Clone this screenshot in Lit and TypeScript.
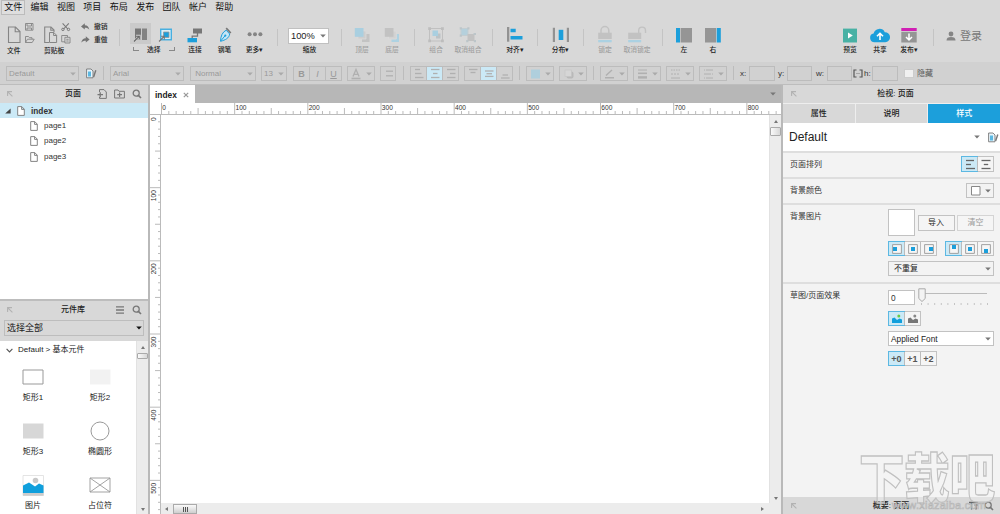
import { LitElement, html, svg, css } from "lit";
import { customElement } from "lit/decorators.js";

const ic = (w: number, h: number, body: any) =>
  html`<svg class="ic" width=${w} height=${h} viewBox="0 0 ${w} ${h}" fill="none">${body}</svg>`;

const G = "#858585";
const BLUE = "#1c9fdb";

const pageIcon = ic(8, 10, svg`<path d="M.7 .6H4.8L7.3 3.2V9.4H.7Z M4.6 .8V3.4H7.2" stroke="#777" stroke-width=".9" fill="#fff"/>`);
const search = ic(10, 10, svg`<circle cx="4.2" cy="4.2" r="3" stroke="#777" stroke-width="1.3"/><path d="M6.4 6.4L9 9" stroke="#777" stroke-width="1.6"/>`);
const corner = ic(6, 6, svg`<path d="M.6 5V.6H5M.8 .8L5.4 5.4" stroke="#b2b2b2" stroke-width="1.1"/>`);
const styleIcon = ic(11, 11, svg`<path d="M.6 1H5L7 3V9.8H.6Z" stroke="#777" stroke-width=".9" fill="#e8f5fb"/><path d="M2 3.5H5V8.5H2Z" fill="#5bb8e2"/><path d="M9.8 2.6L7.6 9" stroke="#777" stroke-width="1.4"/>`);
const arrow = (c = "#888") => ic(6, 4, svg`<path d="M.2 .4H5.8L3 3.5Z" fill="${c}"/>`);

const fileIcons = ic(32, 24, svg`
  <path d="M3.5 5H10.5L15 9.5V20.5H3.5ZM10.2 5V9.8H15" stroke="${G}" stroke-width="1.1"/>
  <path d="M20.5 1.5H28V8.2H20.5ZM22 1.5V4H26.5V1.5M22 8V6H26.5V8" stroke="${G}" stroke-width=".9"/>
  <path d="M20.5 20.5V14.5H23.5L24.5 15.7H27V17.2M20.5 20.5L22.5 17.2H29.2L27.2 20.5Z" stroke="${G}" stroke-width=".9"/>`);
const clipIcons = ic(32, 24, svg`
  <path d="M7 20.5H2.7V5H9L12 8V10M8.8 5V8.3H12" stroke="${G}" stroke-width="1.1"/>
  <path d="M7.5 10.5H11.8L14.6 13.3V20.5H7.5ZM11.6 10.5V13.5H14.6" stroke="${G}" stroke-width="1"/>
  <path d="M20.6 1.3L25.8 7M26.8 1.3L21.6 7" stroke="#777" stroke-width="1.1"/><circle cx="20.9" cy="7.4" r="1.2" stroke="#777"/><circle cx="26.5" cy="7.4" r="1.2" stroke="#777"/>
  <path d="M23 19.8H19.7V13.5H25.5V15M22.9 15.3H28V21H22.9ZM24.3 17.3H26.6M24.3 19H26.6" stroke="${G}" stroke-width=".9"/>`);
const undo = ic(9, 8, svg`<path d="M0 3.4L3.8 .2V2.2C6.4 2.3 8 3.8 8.3 6.8C7.2 5.2 5.9 4.7 3.8 4.7V6.6Z" fill="#747474"/>`);
const redo = ic(9, 8, svg`<path d="M8.6 3.4L4.8 .2V2.2C2.2 2.3 .6 3.8 .3 6.8C1.4 5.2 2.7 4.7 4.8 4.7V6.6Z" fill="#747474"/>`);
const selA = ic(21, 21, svg`<path d="M5 5.5H11V17H9.5L5 17Z" fill="#767676"/><path d="M12 5.5H17V17H12Z" fill="#828282"/><path d="M4 18.5L9.5 13M6 13H9.5V17" stroke="#d0d0d0" stroke-width="2.4"/><path d="M4 18.5L9.3 13.2M6 13.2H9.3V16.5" stroke="#666" stroke-width="1.1"/>`);
const selB = ic(21, 21, svg`<path d="M5.7 6.2H16.3V16.8H5.7Z" stroke="#48afe0" stroke-width="1.4" fill="#dceef6"/><path d="M8.5 9H14V14.5H8.5Z" fill="${BLUE}" stroke="#999" stroke-width=".8"/><path d="M4 18.5L9.5 13M6 13.2H9.3V16.5" stroke="#777" stroke-width="1.1"/>`);
const connect = ic(16, 24, svg`<path d="M6 6.5H15V11.5H6Z" fill="#777"/><path d="M5.2 16V14.2H10.5V11" stroke="#777" stroke-width="1.3"/><path d="M.5 16H10V20.3H.5Z" fill="${BLUE}"/>`);
const pen = ic(14, 24, svg`<path d="M8.2 8.2L11.7 12C11 16.2 7.5 18 2.5 19.3C2.7 14 4.4 10 8.2 8.2Z" fill="#c6e6f5" stroke="${BLUE}"/><path d="M2.7 19L7 13.8" stroke="${BLUE}"/><circle cx="7.3" cy="13.6" r="1.1" fill="${BLUE}"/><path d="M8.2 6.2L12.8 11" stroke="#777" stroke-width="1.7"/>`);
const dots = ic(16, 24, svg`<circle cx="2.6" cy="12.3" r="2" fill="#858585"/><circle cx="8" cy="12.3" r="2" fill="#858585"/><circle cx="13.4" cy="12.3" r="2" fill="#858585"/>`);
const front = ic(16, 24, svg`<path d="M8 12H15.5V20H8Z" fill="#c3c3c3"/><path d="M4 9H12V17H4Z" fill="#cdcdcd" stroke="#dadada" stroke-width=".8"/><path d="M.8 6H9.5V14.8H.8Z" fill="#a9cfe0"/>`);
const back = ic(16, 24, svg`<path d="M7.5 12H15V20H7.5Z" fill="#aed2e2"/><path d="M4.5 9H12.3V17H4.5Z" fill="#d2d2d2" stroke="#dadada"/><path d="M.8 6H9.5V14.8H.8Z" fill="#c2c2c2"/>`);
const group = ic(16, 24, svg`<path d="M1.5 6.5H14.5V19H1.5Z" stroke="#c0c0c0"/><path d="M8 11.5H12.5V16.5H8Z" fill="#bcc3c6"/><path d="M4.5 8.5H10V14H4.5Z" fill="#a9cfe0"/><path d="M.2 5.2H3V8H.2ZM13 5.2H15.8V8H13ZM.2 17.5H3V20.3H.2ZM13 17.5H15.8V20.3H13Z" fill="#bdbdbd"/>`);
const ungroup = ic(18, 24, svg`<path d="M2 6.5H9V13.5H2Z" fill="#b5d0dc" stroke="#c3cdd1"/><path d="M8.5 12H15.5V19H8.5Z" fill="#c2c2c2"/><path d="M.7 5.2H2.9V7.4H.7ZM8.3 5.2H10.5V7.4H8.3ZM.7 12.6H2.9V14.8H.7ZM14.5 11H17V13H14.5ZM7.2 18H9.4V20.2H7.2ZM14.8 18H17V20.2H14.8Z" fill="#bcc5c9"/>`);
const align = ic(18, 24, svg`<path d="M1 5H3.3V19.7H1Z" fill="#929292"/><path d="M4.5 6.8H9.7V10.2H4.5ZM4.5 14H16.5V17.5H4.5Z" fill="${BLUE}"/>`);
const spread = ic(18, 24, svg`<path d="M.8 5.7H3V20H.8ZM14.8 5.7H17V20H14.8Z" fill="#929292"/><path d="M6.7 7.8H11.3V18H6.7Z" fill="${BLUE}"/>`);
const lock = ic(16, 24, svg`<path d="M4 11V8.5A3.9 3.9 0 0 1 11.8 8.5V11" stroke="#c2c2c2" stroke-width="1.5"/><path d="M1.2 10.7H14.7V17H1.2Z" fill="#c2c2c2"/><path d="M1.2 18H14.7V20.3H1.2Z" fill="#abd1e2"/>`);
const unlock = ic(20, 24, svg`<path d="M11.7 11V8.5A3.4 3.4 0 0 1 18.5 8.5V11" stroke="#c2c2c2" stroke-width="1.4"/><path d="M1.2 10.7H14.2V17H1.2Z" fill="#c2c2c2"/><path d="M1.2 18H14.2V20.3H1.2Z" fill="#abd1e2"/>`);
const dockL = ic(16, 24, svg`<path d="M4.6 6H16V20.5H4.6Z" fill="#959595"/><path d="M0 6H4V20.5H0Z" fill="${BLUE}"/>`);
const dockR = ic(16, 24, svg`<path d="M0 6H11V20.5H0Z" fill="#959595"/><path d="M11.7 6H15.8V20.5H11.7Z" fill="${BLUE}"/>`);
const preview = ic(14, 24, svg`<path d="M0 6.6H14V20.5H0Z" fill="#48b1a4"/><path d="M5 10.5L9.8 13.5L5 16.5Z" fill="#fff"/>`);
const cloud = ic(20, 24, svg`<path d="M4.6 20.2A4.4 4.4 0 0 1 3.6 11.5A6 6 0 0 1 14.8 10.2A5 5 0 0 1 15.3 20.2Z" fill="${BLUE}"/><path d="M10 18V12M7 14.3L10 11.3L13 14.3" stroke="#fff" stroke-width="1.6"/>`);
const publish = ic(16, 24, svg`<path d="M.3 6H15.7V9H.3Z" fill="#d01fb4"/><path d="M.3 9.8H15.7V20.5H.3Z" fill="#959595"/><path d="M8 11.5V17.5M5 15L8 18L11 15" stroke="#fff" stroke-width="1.5"/>`);

const lines = (a: number[][], c: string) => ic(14, 13, svg`${a.map(([x1, x2, y]) => svg`<path d="M${x1} ${y}H${x2}" stroke="${c}" stroke-width="1.3"/>`)}`);

type Tool = { w: number; icon?: any; label?: string; off?: boolean; sep?: boolean };
const sep: Tool = { w: 1, sep: true };
const TOOLS: Tool[] = [
  { w: 30, icon: connect, label: "连接" }, { w: 29, icon: pen, label: "钢笔" }, { w: 31, icon: dots, label: "更多▾" }, { w: 7 }, sep,
  { w: 63, icon: html`<div class="zoom"><span>100%</span>${arrow("#777")}</div>`, label: "缩放" }, sep,
  { w: 40, icon: front, label: "顶层", off: true }, { w: 20, icon: back, label: "底层", off: true }, { w: 12 }, sep,
  { w: 42, icon: group, label: "组合", off: true }, { w: 22, icon: ungroup, label: "取消组合", off: true }, { w: 13 }, sep,
  { w: 44, icon: align, label: "对齐▾" }, sep, { w: 45, icon: spread, label: "分布▾" }, sep,
  { w: 42, icon: lock, label: "锁定", off: true }, { w: 22, icon: unlock, label: "取消锁定", off: true }, { w: 14 }, sep,
  { w: 42, icon: dockL, label: "左" }, { w: 16, icon: dockR, label: "右" }, { w: 114 },
  { w: 30, icon: preview, label: "预览" }, { w: 30, icon: cloud, label: "共享" }, { w: 28, icon: publish, label: "发布▾" }, { w: 10 }, sep,
];

const STEP = 73.17;

@customElement("app-root")
export class AppRoot extends LitElement {
  static styles = css`
    :host { display: flex; flex-direction: column; position: relative; width: 1000px; height: 514px; overflow: hidden; background: #d8d8d8; color: #222;
      font: 8px/12px "Liberation Sans", "Noto Sans CJK SC", sans-serif; white-space: nowrap; }
    * { box-sizing: border-box; }
    .ic { display: block; flex: none; overflow: visible; }
    .menu { display: flex; height: 15px; flex: none; padding-left: 1px; font-size: 9px; line-height: 13px; color: #111; }
    .menu span { width: 24.4px; margin-right: 2px; text-align: center; height: 15px; border: 1px solid transparent; }
    .menu .on { border-color: #bcbcbc; background: #dedede; }
    .tools { display: flex; height: 47px; flex: none; padding: 7px 0 0 5px; }
    .tool { flex: none; display: flex; flex-direction: column; align-items: center; font-size: 6.8px; line-height: 8px; color: #222; height: 34px; }
    .tool .lab { height: 8px; font-weight: 500; }
    .tool.start { align-items: flex-start; width: 32px; margin-right: 5px; }
    .tool.start .lab { padding-left: 2px; margin-top: 1px; }
    .tool.off { color: #a0a0a0; }
    .sep { width: 1px; height: 17px; margin-top: 7px; background: #c4c4c4; flex: none; }
    .icbox { height: 24px; display: flex; flex: none; }
    .hist { width: 40px; padding-left: 2px; display: flex; flex-direction: column; gap: 5px; font-size: 6.8px; line-height: 8px; font-weight: 500; padding-top: 1px; }
    .hist div { display: flex; gap: 4px; align-items: center; height: 8px; }
    .sel { width: 60px; display: flex; flex-direction: column; padding: 1px 0 0 10px; font-size: 6.8px; line-height: 8px; }
    .selrow { display: flex; gap: 4px; height: 23px; }
    .selrow .hot { background: #cacaca; height: 21px; }
    .sellab { display: flex; padding-left: 3px; gap: 8px; font-weight: 500; }
    .br { width: 6px; height: 4px; margin-top: 1px; border: 1px solid #888; border-width: 0 0 1px 1px; }
    .br.r { border-width: 0 1px 1px 0; }
    .zoom { margin: 6px 2px 0 0; width: 41px; height: 16px; background: #fff; border: 1px solid #c0c0c0; display: flex; align-items: center; justify-content: space-between; padding: 0 2px; font-size: 9.3px; }
    .user { display: flex; padding: 9px 0 0 12px; gap: 4px; font-size: 11px; line-height: 11px; color: #777; }
    .fmt { display: flex; height: 23px; flex: none; background: #d1d1d1; padding: 4px 0 0 6px; border-bottom: 1px solid #bdbdbd; color: #999; }
    .box { height: 15px; flex: none; border: 1px solid #bcbcbc; display: flex; align-items: center; justify-content: space-between; padding: 0 2px; }
    .box.c { justify-content: center; padding: 0; }
    .seg { display: flex; height: 15px; flex: none; border: 1px solid #bcbcbc; }
    .seg > * { flex: 1; display: flex; align-items: center; justify-content: center; border-left: 1px solid #bcbcbc; font-size: 9px; }
    .seg > *:first-child { border-left: 0; }
    .seg .on { background: #cbe9f6; }
    .fsep { width: 1px; height: 14px; background: #bcbcbc; flex: none; }
    .fl { line-height: 15px; flex: none; color: #333; }
    .chk { width: 10px; height: 9px; background: #f0f0f0; border: 1px solid #ccc; margin: 3px 3px 0 6px; }
    .main { flex: 1; display: flex; min-height: 0; }
    .left { width: 148px; display: flex; flex-direction: column; background: #fff; flex: none; }
    .head { height: 18px; flex: none; background: #d8d8d8; display: flex; align-items: center; padding: 0 6px 0 7px; }
    .title { flex: 1; text-align: center; color: #222; font-weight: 500; }
    .left .title { padding-left: 32px; text-align: left; }
    .acts { display: flex; gap: 7px; align-items: center; }
    .foot .acts { gap: 5px; }
    .tree { height: 196px; flex: none; }
    .row { height: 15.4px; display: flex; align-items: center; gap: 6px; padding-left: 30px; color: #333; }
    .row.root { background: #cbe9f6; font-weight: bold; font-size: 8.3px; padding-left: 5px; height: 15.4px; }
    .lib { flex: 1; display: flex; flex-direction: column; border-top: 2px solid #bdbdbd; min-height: 0; }
    .pick { height: 22px; flex: none; background: #d8d8d8; padding: 1px 4px 5px; }
    .pick div { height: 16px; border: 1px solid #bdbdbd; display: flex; align-items: center; justify-content: space-between; padding: 0 1px 0 2px; font-size: 9px; }
    .libbody { flex: 1; display: flex; min-height: 0; overflow: hidden; }
    .shapes { flex: 1; padding-top: 3px; }
    .cat { display: flex; align-items: center; gap: 5px; padding-left: 6px; height: 12px; }
    .grid { display: grid; grid-template-columns: 66px 68px; grid-auto-rows: 54px; padding-top: 7px; }
    .grid div { display: flex; flex-direction: column; align-items: center; line-height: 14px; }
    .grid .ic { height: 28px; }
    .vbar { width: 12px; background: #ececec; display: flex; flex-direction: column; align-items: center; padding: 5px 0 3px; flex: none; border-left: 1px solid #e2e2e2; }
    .thumb { width: 11px; height: 6px; border: 1px solid #aaa; border-radius: 1px; background: linear-gradient(90deg, #fafafa, #d8d8d8); margin: 4px 0 auto; flex: none; }
    .split { width: 2px; background: #b9b9b9; flex: none; }
    .center { width: 631px; display: flex; flex-direction: column; flex: none; background: #fff; }
    .tabs { height: 18px; background: #b7b7b7; display: flex; align-items: center; justify-content: space-between; padding-right: 5px; flex: none; }
    .tab { width: 45px; height: 18px; background: #fff; display: flex; align-items: center; justify-content: space-between; padding: 1px 6px 0 5px; font-weight: bold; font-size: 8.4px; }
    .work { flex: 1; display: flex; min-height: 0; overflow: hidden; }
    .stage { flex: 1; display: flex; flex-direction: column; }
    .canvas { flex: 1; display: flex; min-height: 0; }
    .blank { flex: 1; }
    .hbar { height: 11px; background: #ececec; display: flex; align-items: center; padding: 0 17px 0 4px; gap: 5px; flex: none; }
    .hthumb { width: 24px; height: 10px; border: 1px solid #aaa; background: linear-gradient(#fafafa, #cfcfcf); display: flex; justify-content: center; gap: 1px; padding-top: 2px; margin: 1px auto 0 0; }
    .hthumb i { width: 1px; height: 5px; background: #555; }
    .rt { font: 6.6px "Liberation Sans"; fill: #333; }
    .right { flex: 1; background: #f3f3f3; display: flex; flex-direction: column; }
    .rtabs { display: flex; height: 20px; gap: 1px; border-top: 1px solid #eee; flex: none; background: #eee; }
    .rtabs div { flex: 1; background: #d8d8d8; text-align: center; line-height: 19px; font-weight: 500; }
    .rtabs .on { background: #1c9fdb; color: #fff; }
    .def { height: 28px; background: #fff; display: flex; align-items: center; font-size: 12px; padding: 0 1px 0 6px; flex: none; gap: 8px; }
    .def span { flex: 1; }
    .sec { display: flex; justify-content: space-between; border-top: 2px solid #dedede; padding: 4px 6px 0 7px; flex: none; color: #333; }
    .sec > span { line-height: 16px; }
    .pair { margin-top: -1px; }
    .ctl { width: 106px; display: flex; flex-direction: column; gap: 5px; }
    .line { display: flex; justify-content: space-between; align-items: center; }
    .btn { height: 16px; border: 1px solid #c2c2c2; background: #f5f5f5; text-align: center; line-height: 14px; width: 37px; color: #222; }
    .btn.dis { color: #999; border-color: #d4d4d4; }
    .ctl .seg, .pair .seg { background: #f5f5f5; border-color: #c2c2c2; }
    .pair .seg { height: 16px; }
    .seg .act { background: #cbe9f6; outline: 1px solid #5cb8e2; border-color: transparent; }
    .w49 { width: 49px; } .w33 { width: 33px; }
    .sw { width: 27px; height: 27px; background: #fff; border: 1px solid #c2c2c2; }
    .dd { height: 15px; border: 1px solid #c2c2c2; display: flex; align-items: center; justify-content: space-between; padding: 0 2px 0 5px; color: #222; }
    .cp { padding: 0 2px 0 4px; }
    .wh { background: #fff; padding-left: 2px; font-size: 8.3px; }
    .num { width: 27px; height: 15px; background: #fff; border: 1px solid #c2c2c2; padding-left: 2px; line-height: 14px; font-size: 8.3px; }
    .gray { color: #555; }
    .foot { margin-top: auto; height: 17px; }
    .right .head { padding: 0 6px 0 8px; }
    .mark { position: absolute; left: 858px; top: 447px; width: 140px; height: 67px; overflow: visible; pointer-events: none; }
    .m1 { font: 900 46px "Noto Sans CJK SC"; fill: rgba(245,245,245,.4); stroke: #c0c0c0; stroke-width: 1.1px; }
    .m2 { font: 11px "Liberation Sans"; fill: rgba(225,225,225,.6); stroke: #b4b4b4; stroke-width: .6px; }
  `;

  gap(n: number) { return html`<div style="width:${n}px;flex:none"></div>`; }
  drop(w: number, content: any) { return html`<div class="box" style="width:${w}px">${content}${arrow("#aaa")}</div>`; }

  ticks(n: number, vertical: boolean) {
    return Array.from({ length: n }, (_, i) => {
      const p = (i * STEP) / 10 + 0.5;
      const from = i % 10 === 0 ? 0 : i % 5 === 0 ? 5 : 8;
      return vertical ? svg`<path d="M${from} ${p}H11" stroke="#bbb"/>` : svg`<path d="M${p} ${from}V11" stroke="#bbb"/>`;
    });
  }

  pos(x: number, y: number, act: boolean) {
    return html`<div class=${act ? "act" : ""}>${ic(10, 10, svg`<path d="M.6 .6H9.4V9.4H.6Z" stroke="#999" stroke-width=".9" fill="#f6f6f6"/><path d="M${x} ${y}h4v4h-4Z" fill="${BLUE}"/>`)}</div>`;
  }

  toolbar() {
    return html`<div class="tools">
      <div class="tool start">${fileIcons}<div class="lab">文件</div></div>
      <div class="tool start">${clipIcons}<div class="lab">剪贴板</div></div>
      <div class="hist"><div>${undo}撤销</div><div>${redo}重做</div></div>
      <div class="sep"></div>
      <div class="sel"><div class="selrow"><div class="hot">${selA}</div><div>${selB}</div></div>
        <div class="sellab"><div class="br"></div>选择<div class="br r"></div></div></div>
      ${TOOLS.map((t) => t.sep ? html`<div class="sep"></div>` : html`<div class="tool ${t.off ? "off" : ""}" style="width:${t.w}px"><div class="icbox">${t.icon ?? ""}</div><div class="lab">${t.label ?? ""}</div></div>`)}
      <div class="user">${ic(10, 11, svg`<circle cx="5" cy="3" r="2.4" fill="#858585"/><path d="M.5 9.5C.5 7 2 6 5 6S9.5 7 9.5 9.5Z" fill="#858585"/>`)}登录</div>
    </div>`;
  }

  format() {
    const c = "#b0b0b0";
    const s = html`<div class="fsep"></div>`;
    const field = (l: string, lw: number, w: number) => html`<span class="fl" style="width:${lw}px">${l}</span><div class="box" style="width:${w}px"></div>`;
    return html`<div class="fmt">
      ${this.drop(73, "Default")}${this.gap(7)}${ic(11, 14, svg`<path d="M.6 3H5L7 5V11.8H.6Z" stroke="#777" stroke-width=".9" fill="#e8f5fb"/><path d="M2 5.5H5V10.5H2Z" fill="#5bb8e2"/><path d="M9.8 4.2L7.6 11" stroke="#777" stroke-width="1.4"/>`)}${this.gap(6)}${s}
      ${this.gap(6)}${this.drop(74, "Arial")}${this.gap(6)}${this.drop(66, html`<span>&nbsp;Normal</span>`)}${this.gap(5)}${this.drop(26, "13")}
      ${this.gap(6)}<div class="seg w49"><b>B</b><i>I</i><u>U</u></div>
      ${this.gap(5)}${this.drop(28, ic(12, 12, svg`<path d="M3 8.5L6 1.5L9 8.5M4 6.3H8" stroke="${c}" stroke-width="1.3"/><path d="M1.5 10.5H10.5" stroke="${c}" stroke-width="1.6"/>`))}
      ${this.gap(5)}<div class="box c" style="width:16px">${lines([[5, 12, 4.2], [5, 12, 8.8]], c)}${this.gap(0)}</div>
      ${this.gap(7)}${s}${this.gap(6)}
      <div class="seg w49"><div>${lines([[3, 8, 2.5], [3, 9.5, 6.5], [3, 11.5, 10.5]], c)}</div><div class="on">${lines([[3, 11.5, 2.5], [5, 9.5, 6.5], [3, 11.5, 10.5]], c)}</div><div>${lines([[3, 11.5, 2.5], [6, 11.5, 6.5], [3, 11.5, 10.5]], c)}</div></div>
      ${this.gap(5)}
      <div class="seg w49"><div>${lines([[3, 11.5, 2.5], [4.5, 9.5, 5.5]], c)}</div><div class="on">${lines([[3, 11.5, 4], [4.5, 10, 6.7], [3, 11.5, 9.4]], c)}</div><div>${lines([[4.5, 10, 8], [3, 11.5, 11]], c)}</div></div>
      ${this.gap(6)}${s}${this.gap(6)}
      ${this.drop(28, ic(13, 12, svg`<path d="M2 1.5H11V10.5H2Z" fill="#afcfdd"/>`))}${this.gap(5)}
      ${this.drop(28, ic(13, 12, svg`<rect x="4.5" y="3.5" width="7" height="7" rx="2" fill="#b9b9b9"/><rect x="3" y="2" width="6.5" height="6.5" fill="#d6d6d6" stroke="#c4c4c4" stroke-width=".6"/>`))}
      ${this.gap(6)}${s}${this.gap(6)}
      ${this.drop(28, ic(13, 12, svg`<path d="M2 9.8H11M3 7.5L9 2" stroke="${c}" stroke-width="1.4"/>`))}${this.gap(5)}
      ${this.drop(28, ic(13, 12, svg`<path d="M2 2H11" stroke="${c}"/><path d="M2 5.3H11" stroke="${c}" stroke-width="1.6"/><path d="M2 9.4H11" stroke="${c}" stroke-width="2.4"/>`))}${this.gap(5)}
      ${this.drop(28, ic(13, 12, svg`<path d="M2 2H11" stroke="${c}" stroke-dasharray="1.5 1"/><path d="M2 6H11" stroke="${c}" stroke-dasharray="2 1"/><path d="M2 10H11" stroke="${c}"/>`))}${this.gap(5)}
      ${this.drop(28, ic(13, 12, svg`<path d="M4 2H11M2 6H9M4 10H11" stroke="${c}"/><path d="M2 2h1M10 6h1M2 10h1" stroke="${c}"/>`))}
      ${this.gap(6)}${s}${this.gap(6)}
      ${field("x:", 9, 26)}${this.gap(3)}${field("y:", 9, 25)}${this.gap(4)}${field("w:", 11, 25)}
      ${this.gap(1)}${ic(10, 15, svg`<path d="M3.5 4H1V11H3.5M6.5 4H9V11H6.5" stroke="#555" stroke-width="1.2"/><path d="M3 7.5H7" stroke="#999" stroke-width=".8"/>`)}${this.gap(1)}${field("h:", 8, 26)}
      <div class="chk"></div><span class="fl gray">隐藏</span>
    </div>`;
  }

  left() {
    const shape = (i: any, l: string) => html`<div>${i}${l}</div>`;
    return html`<div class="left">
      <div class="head">${corner}<div class="title"><span style="padding-left:20px">页面</span></div><div class="acts">
        ${ic(10, 10, svg`<path d="M2.5 3V.6H7L9.3 3V9.4H2.5V8" stroke="#777"/><path d="M.5 5.7H6M3.2 3.2V8.2" stroke="#777" stroke-width="1.3"/>`)}
        ${ic(11, 10, svg`<path d="M.6 9V1H4L5 2.3H10.4V9Z" stroke="#777"/><path d="M3.2 5.7H8M5.6 3.4V8" stroke="#777" stroke-width="1.2"/>`)}${search}</div></div>
      <div class="tree">
        <div class="row root">${ic(6, 6, svg`<path d="M5.6 .4V5.6H.2Z" fill="#444"/>`)}${pageIcon}index</div>
        ${["page1", "page2", "page3"].map((p) => html`<div class="row">${pageIcon}${p}</div>`)}
      </div>
      <div class="lib">
        <div class="head">${corner}<div class="title"><span style="padding-left:16px">元件库</span></div><div class="acts">${ic(10, 10, svg`<path d="M1 1.8H9M1 5H9M1 8.2H9" stroke="#777" stroke-width="1.3"/>`)}${search}</div></div>
        <div class="pick"><div>选择全部${arrow("#111")}</div></div>
        <div class="libbody"><div class="shapes">
          <div class="cat">${ic(7, 5, svg`<path d="M.6 .8L3.5 3.9L6.4 .8" stroke="#555" stroke-width="1.1"/>`)}Default &gt; 基本元件</div>
          <div class="grid">
            ${shape(ic(22, 28, svg`<path d="M1 7H21V21H1Z" stroke="#999"/>`), "矩形1")}
            ${shape(ic(22, 28, svg`<path d="M1 6.5H21.5V21.5H1Z" fill="#f2f2f2"/>`), "矩形2")}
            ${shape(ic(22, 28, svg`<path d="M1 6.5H21.5V21.5H1Z" fill="#d7d7d7"/>`), "矩形3")}
            ${shape(ic(22, 28, svg`<circle cx="11" cy="14" r="9" stroke="#999"/>`), "椭圆形")}
            ${shape(ic(22, 28, svg`<path d="M1 4.5H21.5V24.5H1Z" fill="#fff" stroke="#ddd" stroke-width=".8"/><circle cx="13.5" cy="9.5" r="2.8" fill="#c8c8c8"/><path d="M1 14.5L7 11.5L13 15.5L17 12.5L21.5 14.5V22H1Z" fill="#109fdc"/><path d="M1 22H21.5V24.7H1Z" fill="#ccc"/>`), "图片")}
            ${shape(ic(22, 28, svg`<path d="M1 7H21V21H1ZM1 7L21 21M21 7L1 21" stroke="#999" stroke-width=".9"/>`), "占位符")}
          </div></div>
          <div class="vbar">${ic(4, 3, svg`<path d="M0 3L2 0L4 3Z" fill="#777"/>`)}<div class="thumb"></div>${ic(4, 3, svg`<path d="M0 0H4L2 3Z" fill="#777"/>`)}</div>
        </div>
      </div>
    </div>`;
  }

  center() {
    return html`<div class="center">
      <div class="tabs"><div class="tab">index${ic(6, 6, svg`<path d="M.8 .8L5.2 5.2M5.2 .8L.8 5.2" stroke="#999" stroke-width="1.2"/>`)}</div>${arrow("#777")}</div>
      <div class="work">
        <svg class="ic" width="11" height="411" viewBox="0 0 11 411" fill="none">
          <path d="M10.5 11V411M0 11.5H11" stroke="#bbb"/>
          <g transform="translate(0 11)">${this.ticks(55, true)}
          ${[0, 1, 2, 3, 4, 5].map((i) => svg`<text class="rt" transform="translate(6 ${i * STEP + (i ? 14 : 7)}) rotate(-90)">${i * 100}</text>`)}</g>
        </svg>
        <div class="stage">
          <svg class="ic" width="620" height="12" viewBox="0 0 620 12" fill="none"><path d="M0 11.5H620" stroke="#bbb"/>${this.ticks(85, false)}
          ${[0, 1, 2, 3, 4, 5, 6, 7, 8].map((i) => svg`<text class="rt" x=${i * STEP + 1.3} y="6.5">${i * 100}</text>`)}</svg>
          <div class="canvas"><div class="blank"></div>
            <div class="vbar">${ic(4, 3, svg`<path d="M0 3L2 0L4 3Z" fill="#777"/>`)}<div class="thumb" style="height:9px"></div>${ic(4, 3, svg`<path d="M0 0H4L2 3Z" fill="#777"/>`)}</div></div>
          <div class="hbar">${ic(3, 4, svg`<path d="M3 0V4L0 2Z" fill="#777"/>`)}<div class="hthumb"><i></i><i></i><i></i></div>${ic(3, 4, svg`<path d="M0 0V4L3 2Z" fill="#777"/>`)}</div>
        </div>
      </div>
    </div>`;
  }

  right() {
    const g = "#666";
    const picture = (a: string, b: string) => ic(10, 9, svg`<path d="M0 4.5L2.5 3.5L5 6L7.5 4.5L10 5.5V9H0Z" fill="${a}"/><circle cx="6.8" cy="2" r="1.5" fill="${b}"/>`);
    return html`<div class="right">
      <div class="head">${corner}<div class="title">检视: 页面</div></div>
      <div class="rtabs"><div>属性</div><div>说明</div><div class="on">样式</div></div>
      <div class="def"><span>Default</span>${arrow("#777")}${styleIcon}</div>
      <div class="sec" style="height:26px"><span>页面排列</span><div class="pair"><div class="seg w33"><div class="act">${lines([[3, 11, 2.5], [3, 8, 6.5], [3, 12, 10.5]], g)}</div><div>${lines([[2.5, 11.5, 2.5], [4.8, 9.2, 6.5], [2.5, 11.5, 10.5]], g)}</div></div></div></div>
      <div class="sec" style="height:26px"><span>背景颜色</span><div class="dd cp" style="width:28px">${ic(10, 10, svg`<path d="M.5 .5H9V9H.5Z" fill="#fff" stroke="#888"/>`)}${arrow("#777")}</div></div>
      <div class="sec" style="height:79px"><span>背景图片</span><div class="ctl">
        <div class="line"><div class="sw"></div><div class="btn">导入</div><div class="btn dis">清空</div></div>
        <div class="line"><div class="seg w49">${this.pos(1, 3, true)}${this.pos(3, 3, false)}${this.pos(5, 3, false)}</div><div class="seg w49">${this.pos(3, 1, true)}${this.pos(3, 3, false)}${this.pos(3, 5, false)}</div></div>
        <div class="dd">不重复${arrow("#777")}</div></div></div>
      <div class="sec"><span>草图/页面效果</span><div class="ctl">
        <div class="line"><div class="num">0</div>${ic(76, 18, svg`<path d="M6 5.5H69" stroke="#bbb"/><path d="M.8 .8H7.2V10.5L4 13.5L.8 10.5Z" fill="#f3f3f3" stroke="#aaa"/><path d="${Array.from({ length: 11 }, (_, i) => `M${(3.5 + i * 6.6).toFixed(1)} 15V17`).join("")}" stroke="#c4c4c4"/>`)}</div>
        <div class="seg w33"><div class="act">${picture("#109fdc", "#6c4")}</div><div>${picture("#777", "#888")}</div></div>
        <div class="dd wh">Applied Font${arrow("#777")}</div>
        <div class="seg w49 gray"><b class="act">+0</b><b>+1</b><b>+2</b></div></div></div>
      <div class="head foot">${corner}<div class="title">&emsp;&emsp;概要: 页面</div><div class="acts">${ic(10, 10, svg`<path d="M0 1.5H9M2.5 1.5V8.5M5.5 4H9M7 4V8.5" stroke="#666" stroke-width="1.3"/>`)}${search}</div></div>
    </div>`;
  }

  render() {
    return html`
      <div class="menu">${["文件", "编辑", "视图", "项目", "布局", "发布", "团队", "帐户", "帮助"].map((m, i) => html`<span class=${i ? "" : "on"}>${m}</span>`)}</div>
      ${this.toolbar()}${this.format()}
      <div class="main">${this.left()}<div class="split"></div>${this.center()}<div class="split"></div>${this.right()}</div>
      <svg class="mark" viewBox="0 0 140 67"><text class="m1" transform="translate(1 50.5) scale(1 1.15)" textLength="136" lengthAdjust="spacingAndGlyphs">下载吧</text><text class="m2" x="34" y="61.5" textLength="94">www.xiazaiba.com</text></svg>`;
  }
}
